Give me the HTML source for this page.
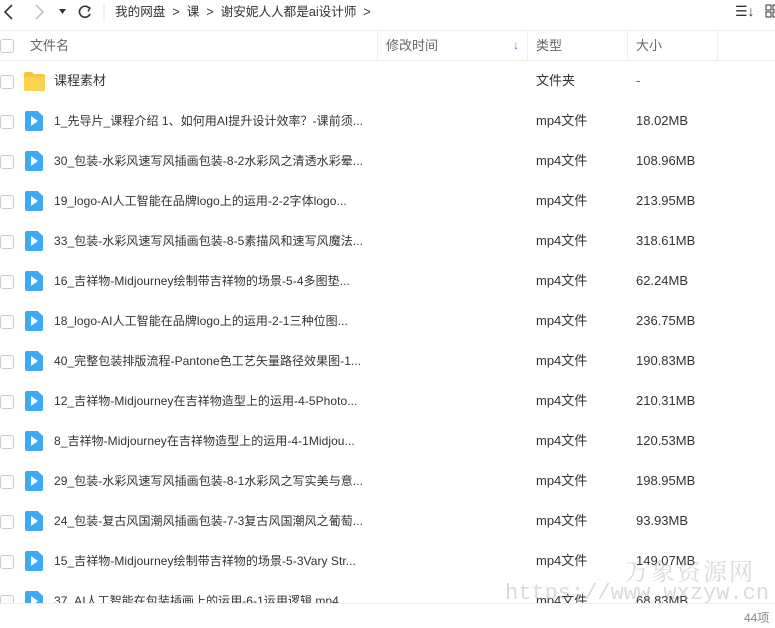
<!DOCTYPE html>
<html><head><meta charset="utf-8"><style>
*{margin:0;padding:0;box-sizing:border-box}
body{width:775px;height:628px;overflow:hidden;background:#fff;font-family:"Liberation Sans","Noto Sans CJK SC",sans-serif;color:#333;font-size:13px;line-height:16px;position:relative}
.a{position:absolute;white-space:nowrap;line-height:16px}
.n{font-size:12px;letter-spacing:0.05px}
.cb{position:absolute;left:0;width:14px;height:14px;border:1px solid #ccc;border-radius:3px;background:#fff}
.fi{position:absolute;left:25px;width:18px;height:20px;background:#3fa9f5;border-radius:2px;clip-path:polygon(0 0,70% 0,100% 25%,100% 100%,0 100%)}
.fi:after{content:"";position:absolute;left:6px;top:5px;border-left:7px solid #fff;border-top:5px solid transparent;border-bottom:5px solid transparent}
.g{color:#666}
</style></head><body>
<svg class="a" style="left:0;top:0" width="110" height="26"><path d="M12 5 L5 12 L12 19" stroke="#333" stroke-width="1.6" fill="none"/><path d="M36 5 L43 12 L36 19" stroke="#bbb" stroke-width="1.4" fill="none"/><path d="M59 9 h7 l-3.5 5z" fill="#333"/><path d="M89 8 A5.5 5.5 0 1 0 90 14" stroke="#333" stroke-width="1.6" fill="none"/><path d="M86 6 l4 2 l-2 3.5" stroke="#333" stroke-width="1.4" fill="none"/><line x1="104" y1="3" x2="104" y2="22" stroke="#e5e5e5"/></svg>
<div class="a" style="left:115px;top:4px;font-size:12.6px">我的网盘 &nbsp;&gt;&nbsp; 课 &nbsp;&gt;&nbsp; 谢安妮人人都是ai设计师 &nbsp;&gt;</div>
<div class="a" style="left:735px;top:3px;font-size:14px">☰↓</div>
<svg class="a" style="left:765px;top:4px" width="12" height="14"><rect x="1" y="1" width="5" height="5" fill="none" stroke="#333"/><rect x="1" y="8" width="5" height="5" fill="none" stroke="#333"/><rect x="8" y="1" width="5" height="5" fill="none" stroke="#333"/><rect x="8" y="8" width="5" height="5" fill="none" stroke="#333"/></svg>
<div class="a" style="left:0;top:30px;width:775px;height:31px;border-top:1px solid #eee;border-bottom:1px solid #eee"></div>
<div class="cb" style="top:39px"></div>
<div class="a g" style="left:30px;top:38px">文件名</div>
<div class="a" style="left:377px;top:31px;width:1px;height:29px;background:#eee"></div>
<div class="a g" style="left:386px;top:38px">修改时间</div>
<div class="a" style="left:513px;top:37px;color:#2a8ff7;font-size:12px;font-weight:bold">↓</div>
<div class="a" style="left:527px;top:31px;width:1px;height:29px;background:#eee"></div>
<div class="a g" style="left:536px;top:38px">类型</div>
<div class="a" style="left:627px;top:31px;width:1px;height:29px;background:#eee"></div>
<div class="a g" style="left:636px;top:38px">大小</div>
<div class="a" style="left:717px;top:31px;width:1px;height:29px;background:#eee"></div>
<div class="cb" style="top:75px"></div>
<svg class="a" style="left:24px;top:71px" width="21" height="20"><path d="M0 3 q0-2 2-2 h6 l2 2 h9 q2 0 2 2 v13 q0 2-2 2 h-17 q-2 0-2-2z" fill="#f7c343"/><rect x="0" y="6" width="21" height="14" rx="2" fill="#fdd24f"/></svg>
<div class="a" style="left:54px;top:73px">课程素材</div>
<div class="a" style="left:536px;top:73px">文件夹</div>
<div class="a g" style="left:636px;top:73px">-</div>
<div id="rows"></div>
<script>
var d=[["1_先导片_课程介绍 1、如何用AI提升设计效率？-课前须...","18.02MB"],["30_包装-水彩风速写风插画包装-8-2水彩风之清透水彩晕...","108.96MB"],["19_logo-AI人工智能在品牌logo上的运用-2-2字体logo...","213.95MB"],["33_包装-水彩风速写风插画包装-8-5素描风和速写风魔法...","318.61MB"],["16_吉祥物-Midjourney绘制带吉祥物的场景-5-4多图垫...","62.24MB"],["18_logo-AI人工智能在品牌logo上的运用-2-1三种位图...","236.75MB"],["40_完整包装排版流程-Pantone色工艺矢量路径效果图-1...","190.83MB"],["12_吉祥物-Midjourney在吉祥物造型上的运用-4-5Photo...","210.31MB"],["8_吉祥物-Midjourney在吉祥物造型上的运用-4-1Midjou...","120.53MB"],["29_包装-水彩风速写风插画包装-8-1水彩风之写实美与意...","198.95MB"],["24_包装-复古风国潮风插画包装-7-3复古风国潮风之葡萄...","93.93MB"],["15_吉祥物-Midjourney绘制带吉祥物的场景-5-3Vary Str...","149.07MB"],["37_AI人工智能在包装插画上的运用-6-1运用逻辑.mp4","68.83MB"]];
var h="";d.forEach(function(r,i){var y=121+40*i;h+='<div class="cb" style="top:'+(y-6)+'px"></div><div class="fi" style="top:'+(y-10)+'px"></div><div class="a n" style="left:54px;top:'+(y-8)+'px">'+r[0]+'</div><div class="a" style="left:536px;top:'+(y-8)+'px">mp4文件</div><div class="a" style="left:636px;top:'+(y-8)+'px">'+r[1]+'</div>';});
document.getElementById("rows").innerHTML=h;
</script>
<div class="a" style="left:625px;top:556px;font-size:24px;line-height:28px;color:rgba(150,150,150,.35);font-family:'Noto Serif CJK SC',serif;letter-spacing:2px">万象资源网</div>
<div class="a" style="left:505px;top:582px;font-size:22px;line-height:24px;color:rgba(150,150,150,.35);font-family:'Liberation Mono',monospace">https://www.wxzyw.cn</div>
<div class="a" style="left:0;top:603px;width:775px;height:25px;background:#fff;border-top:1px solid #eee"></div>
<div class="a" style="left:744px;top:610px;font-size:12px;color:#888">44项</div>
</body></html>
